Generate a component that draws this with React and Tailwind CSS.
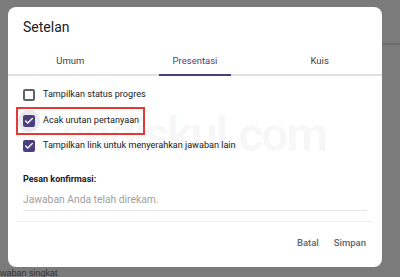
import { Check } from 'lucide-react'

function Box({ checked, ripple }) {
  return (
    <span className="relative flex h-[22px] w-[22px] items-center justify-center">
      {ripple && <span className="absolute inset-0 rounded-full bg-[#e9e8ee]" />}
      {checked ? (
        <span className="relative flex h-[12px] w-[12px] items-center justify-center rounded-[2px] bg-[#4b3f7e]">
          <Check size={10} strokeWidth={3.2} color="#fff" />
        </span>
      ) : (
        <span className="relative h-[12px] w-[12px] rounded-[2px] border-2 border-[#5f6368]" />
      )}
    </span>
  )
}

function Row({ label, checked, ripple }) {
  return (
    <div className="flex h-[22px] items-center gap-[3px]">
      <Box checked={checked} ripple={ripple} />
      <span className="text-[9.1px] text-[#202124]">{label}</span>
    </div>
  )
}

export default function App() {
  const tabs = ['Umum', 'Presentasi', 'Kuis']

  return (
    <div className="relative h-[277px] w-[400px] overflow-hidden bg-[#7b7b7b] font-['Roboto',sans-serif]">
      <div className="absolute left-[382px] right-0 top-[43px] h-[2px] bg-[#6e6e6e]" />
      <div className="relative ml-[8px] mt-[7px] flex h-[260px] w-[374px] flex-col rounded-[8px] bg-white">
        <div className="px-[15px] pt-[10px] text-[14px] leading-[20px] text-[#202124]">Setelan</div>

        <div className="mt-[11px] flex h-[28px] border-b-2 border-[#e0e0e0]">
          {tabs.map((t) => (
            <div key={t} className="relative flex flex-1 items-center justify-center">
              <span className={`text-[9.5px] ${t === 'Presentasi' ? 'text-[#4b3f7e]' : 'text-[#3c4043]'}`}>{t}</span>
              {t === 'Presentasi' && (
                <span className="absolute bottom-[-2px] h-[2px] w-[72px] bg-[#4b3f7e]" />
              )}
            </div>
          ))}
        </div>

        {/* faint watermark behind the options */}
        <div className="pointer-events-none absolute left-[53px] top-[92px] select-none text-[48px] font-bold tracking-[-2px] text-[#000]/[0.04]">
          sodiskul.com
        </div>

        <div className="relative mt-[8px] flex flex-col gap-[3.5px] pl-[10px]">
          <Row label="Tampilkan status progres" />
          <div className="relative">
            <Row label="Acak urutan pertanyaan" checked ripple />
            <div className="absolute left-[-2px] top-[-3px] h-[28px] w-[129px] border-2 border-[#e53935]" />
          </div>
          <Row label="Tampilkan link untuk menyerahkan jawaban lain" checked />
        </div>

        <div className="mt-[16px] px-[15px] text-[9px] leading-[13px] font-bold text-[#202124]">Pesan konfirmasi:</div>
        <div className="mx-[15px] mt-[6px] border-b border-[#e8e8e8] pb-[3px] text-[10.3px] leading-[15px] text-[#a0a0a0]">
          Jawaban Anda telah direkam.
        </div>
        <div className="mx-[10px] mt-[10px] border-b border-[#eeeeee]" />

        <div className="mt-[14px] flex justify-end gap-[15px] pr-[16px] leading-[14px]">
          <span className="text-[9.5px] font-medium text-[#5f6368]">Batal</span>
          <span className="text-[9.5px] font-medium text-[#5f6368]">Simpan</span>
        </div>
      </div>
      <div className="mt-[1px] text-[9px] leading-[10px] text-[#333] font-['Liberation_Sans',sans-serif]">waban singkat</div>
    </div>
  )
}
